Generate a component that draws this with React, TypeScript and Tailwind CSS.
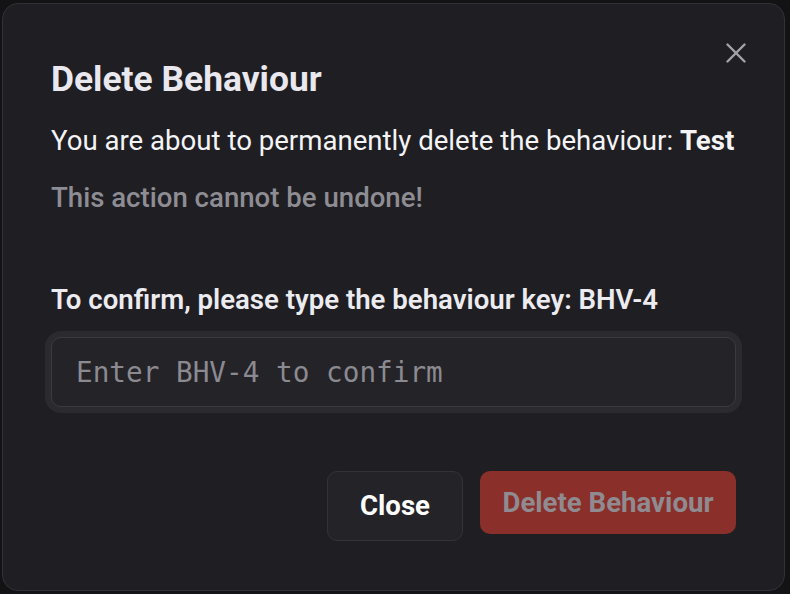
import { useState } from 'react'

export default function App() {
  const [value, setValue] = useState('')
  const behaviourKey = 'BHV-4'
  const canDelete = value === behaviourKey

  return (
    <div
      className="w-[790px] h-[594px] bg-[#131215] pt-[3px] pl-[2px] pr-[5px] pb-[3px]"
      style={{ fontFamily: 'Roboto, "Liberation Sans", sans-serif' }}
    >
      {/* Dialog */}
      <div className="relative h-full rounded-[16px] border border-[#323137] bg-[#1f1e23] px-[48px] pt-[54px]">
        <button
          type="button"
          aria-label="Close"
          className="absolute top-[39px] right-[38px] p-[0px] text-[#a4a3a9]"
        >
          <svg width="20" height="20" viewBox="0 0 20 20" fill="none" stroke="currentColor" strokeWidth="2.4" strokeLinecap="round">
            <path d="M1.5 1.5 L18.5 18.5 M18.5 1.5 L1.5 18.5" />
          </svg>
        </button>

        <h2 className="text-[35.4px] leading-[42px] font-bold text-[#e9e8ef]">Delete Behaviour</h2>

        <p className="mt-[23px] whitespace-nowrap text-[27.6px] leading-[36px] text-[#f4f4f6]">
          You are about to permanently delete the behaviour: <span className="font-bold">Test</span>
        </p>
        <p className="mt-[21px] text-[27.6px] leading-[36px] font-medium text-[#8e8d93]">
          This action cannot be undone!
        </p>

        <label className="mt-[66px] block whitespace-nowrap text-[27.6px] leading-[36px] font-semibold text-[#ecebf0]">
          To confirm, please type the behaviour key: {behaviourKey}
        </label>
        <input
          value={value}
          onChange={(e) => setValue(e.target.value)}
          placeholder={`Enter ${behaviourKey} to confirm`}
          className="mt-[19px] block w-full h-[70px] rounded-[10px] border border-[#3b3a40] bg-[#242328] px-[24px] text-[27.7px] text-[#e9e8ef] placeholder:text-[#8b8a90] outline-none shadow-[0_0_0_6px_#2b2a2f]"
          style={{ fontFamily: '"DejaVu Sans Mono", "Liberation Mono", monospace' }}
        />

        <div className="mt-[64px] flex items-start justify-end gap-[17px]">
          <button
            type="button"
            className="w-[136px] h-[70px] rounded-[10px] border border-[#333237] bg-[#242328] text-[27.6px] font-bold text-white"
          >
            Close
          </button>
          <button
            type="button"
            disabled={!canDelete}
            className="w-[256px] h-[63px] rounded-[10px] bg-[#8a2f2a] text-[27.6px] font-bold text-[#8f8b91]"
          >
            Delete Behaviour
          </button>
        </div>
      </div>
    </div>
  )
}
